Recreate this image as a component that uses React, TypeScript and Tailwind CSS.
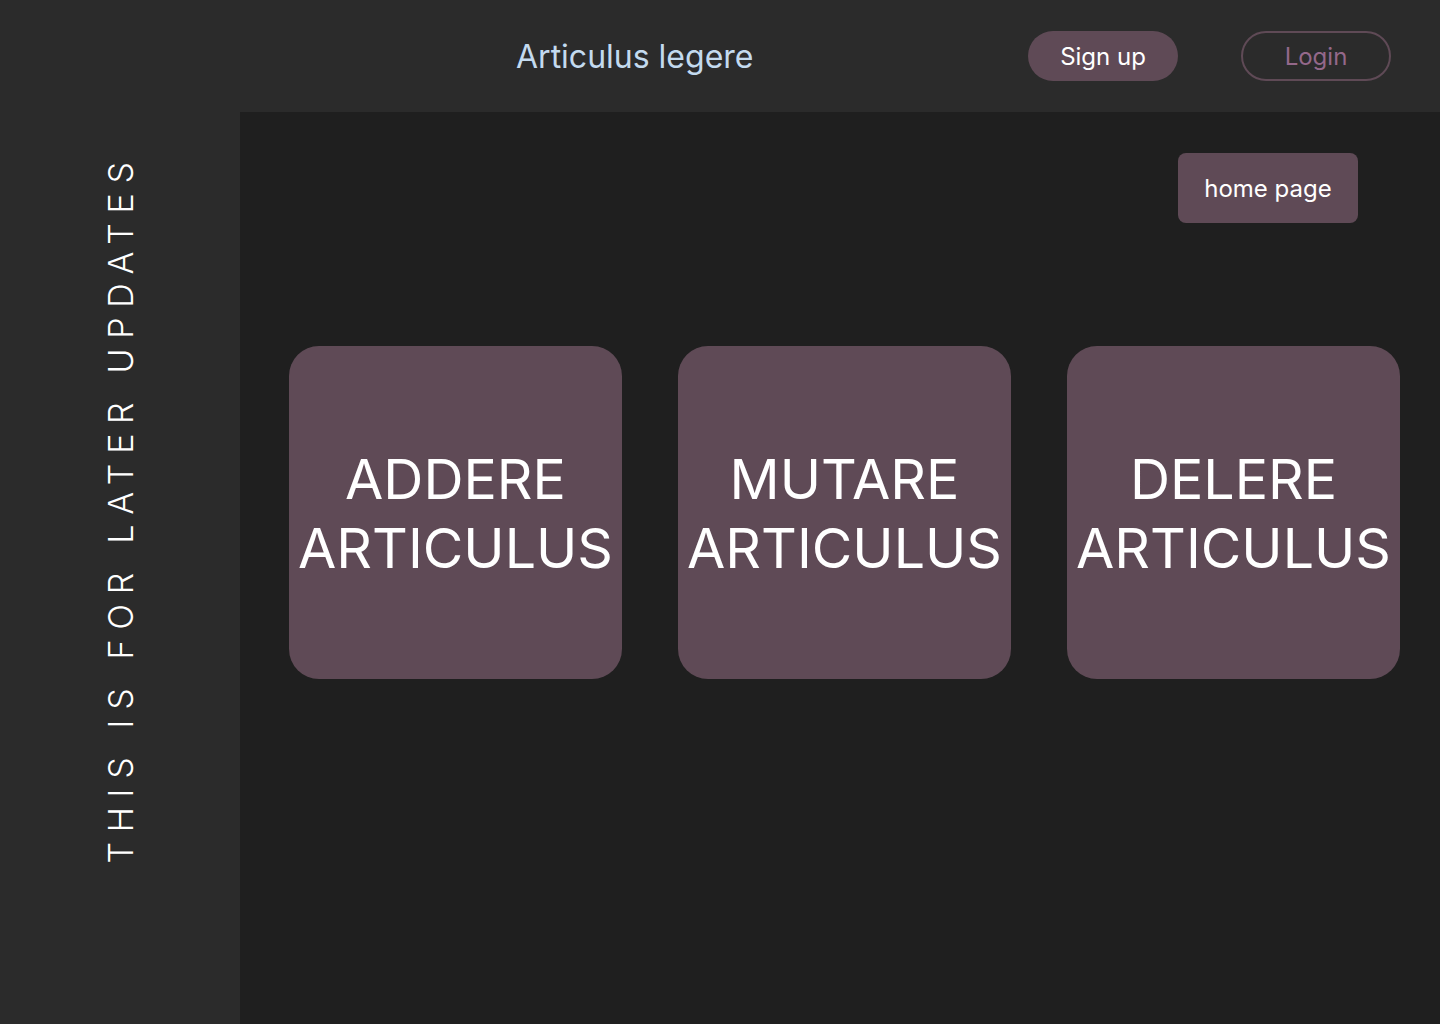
import React from "react";

export default function App() {
  const cards = [
    ["ADDERE", "ARTICULUS"],
    ["MUTARE", "ARTICULUS"],
    ["DELERE", "ARTICULUS"],
  ];
  return (
    <div
      className="w-[1440px] h-[1024px] flex flex-col bg-[#2b2b2b] overflow-hidden"
      style={{ fontFamily: "Inter, 'Noto Sans', sans-serif" }}
    >
      <header className="h-[112px] shrink-0 flex items-center relative">
        <div className="absolute left-[516px] top-[36px] text-[32px] leading-[42px] text-[#c3daef]">
          Articulus legere
        </div>
        <div className="ml-auto flex items-center gap-[63px] mr-[49px]">
          <button className="w-[150px] h-[50px] rounded-full bg-[#5f4a56] text-white text-[24px] pt-[2px]">
            Sign up
          </button>
          <button className="w-[150px] h-[50px] rounded-full border-2 border-[#5f4a56] text-[#94688a] text-[24px] pt-[2px]">
            Login
          </button>
        </div>
      </header>
      <div className="flex flex-1">
        <aside className="w-[240px] shrink-0 bg-[#2b2b2b] relative">
          <div className="absolute left-[121px] top-[396px] w-0 h-0 flex items-center justify-center">
            <div className="-rotate-90 whitespace-nowrap text-white text-[34px] font-light tracking-[0.285em] leading-none">
              THIS IS FOR LATER UPDATES
            </div>
          </div>
        </aside>
        <main className="flex-1 bg-[#1f1f1f] flex flex-col">
          <div className="flex justify-end pr-[82px] pt-[41px]">
            <button className="w-[180px] h-[70px] rounded-lg bg-[#5f4a56] text-white text-[24px] pt-[2px]">
              home page
            </button>
          </div>
          <div className="flex gap-[56px] pl-[49px] mt-[123px]">
            {cards.map(([a, b]) => (
              <div
                key={a}
                className="w-[333px] h-[333px] rounded-[30px] bg-[#5f4a56] flex flex-col items-center justify-center text-white text-[55.5px] leading-[69px] text-center"
              >
                <div>{a}</div>
                <div>{b}</div>
              </div>
            ))}
          </div>
        </main>
      </div>
    </div>
  );
}
